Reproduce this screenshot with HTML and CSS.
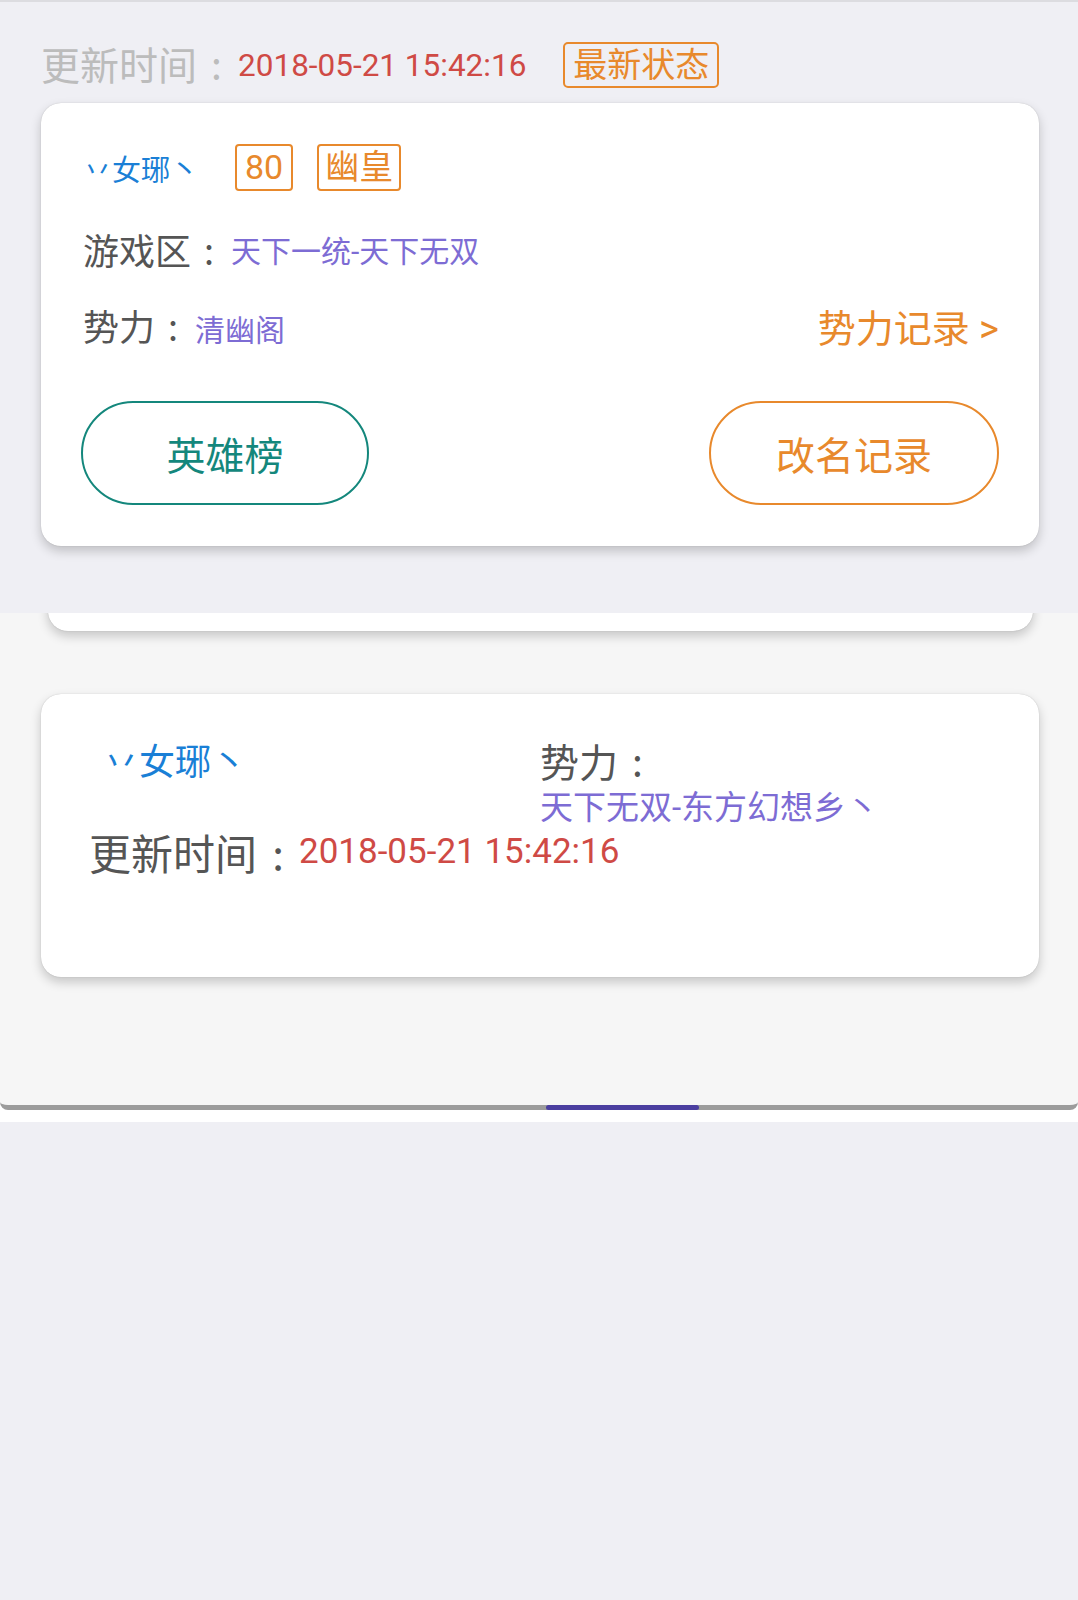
FILE: index.html
```html
<!DOCTYPE html>
<html lang="zh-CN">
<head>
    <meta charset="UTF-8">
    <meta name="viewport" content="width=device-width, initial-scale=1.0">
    <title>角色详情</title>
    <link rel="stylesheet" href="styles.css">
</head>
<body>
    <div class="top-line"></div>

    <!-- Latest status -->
    <div class="status-row">
        <span class="status-label">更新时间<span class="colon">:</span></span>
        <span class="status-time">2018-05-21 15:42:16</span>
        <span class="status-tag">最新状态</span>
    </div>

    <div class="card main-card">
        <div class="name-row">
            <span class="role-name">丷女琊丶</span>
            <span class="tag tag-level">80</span>
            <span class="tag">幽皇</span>
        </div>
        <div class="info-row">
            <span class="info-label">游戏区<span class="colon">:</span></span><span class="info-value">天下一统-天下无双</span>
        </div>
        <div class="info-row info-split">
            <span><span class="info-label">势力<span class="colon">:</span></span><span class="info-value">清幽阁</span></span>
            <a class="more-link" href="#">势力记录 &gt;</a>
        </div>
        <div class="btn-row">
            <a class="pill-btn pill-teal" href="#">英雄榜</a>
            <a class="pill-btn pill-orange" href="#">改名记录</a>
        </div>
    </div>

    <!-- History panel -->
    <div class="panel-wrap">
        <div class="panel">
            <div class="panel-list">
                <div class="card history-card history-prev"></div>
                <div class="card history-card">
                    <div class="history-top">
                        <div class="history-name">丷女琊丶</div>
                        <div class="history-guild">
                            <div class="history-guild-label">势力<span class="colon">:</span></div>
                            <div class="history-guild-value">天下无双-东方幻想乡丶</div>
                        </div>
                    </div>
                    <div class="history-time">
                        <span class="history-time-label">更新时间<span class="colon">:</span></span><span class="history-time-value">2018-05-21 15:42:16</span>
                    </div>
                </div>
            </div>
            <div class="panel-indicator"></div>
        </div>
    </div>
</body>
</html>
```

FILE: styles.css
```css
/* Page */
body {
    margin: 0;
    padding: 0;
    background-color: #efeff4;
    font-family: Roboto, "Noto Sans CJK SC", sans-serif;
    color: #555;
}

a {
    text-decoration: none;
}

/* Colon centered in a full-width cell */
.colon {
    display: inline-block;
    width: 1em;
    text-align: center;
    font-family: "Noto Sans CJK SC", sans-serif;
}

.top-line {
    height: 2px;
    background-color: #dcdce0;
}

/* Status header */
.status-row {
    display: flex;
    align-items: center;
    height: 46px;
    padding: 40px 0 0 41px;
}

.status-label {
    font-size: 39px;
    color: #bcbcbc;
    line-height: 46px;
}

.status-time {
    font-size: 31.5px;
    color: #cf4a45;
    margin-left: 2px;
}

.status-tag {
    margin-left: 37px;
    padding: 0 8px;
    font-size: 34px;
    line-height: 42px;
    color: #e8892c;
    border: 2px solid #e8892c;
    border-radius: 5px;
}

/* Cards */
.card {
    background-color: #fff;
    border-radius: 20px;
    box-shadow: 0 0 1px rgba(0, 0, 0, 0.25), 0 5px 11px rgba(0, 0, 0, 0.2);
}

.main-card {
    box-sizing: border-box;
    height: 443px;
    margin: 15px 39px 0 41px;
    padding: 41px 40px 0 42px;
}

.name-row {
    display: flex;
    align-items: center;
    height: 47px;
}

.role-name {
    font-size: 29px;
    color: #1a7fd6;
    margin-right: 36px;
}

.tag {
    font-size: 34px;
    line-height: 43px;
    padding: 0 6px;
    color: #e8892c;
    border: 2px solid #e8892c;
    border-radius: 4px;
    margin-right: 24px;
}

.tag-level {
    padding: 0 8px;
}

.info-row {
    display: flex;
    align-items: center;
    height: 50px;
    margin-top: 33px;
}

.info-split {
    justify-content: space-between;
    margin-top: 26px;
}

.info-label {
    font-size: 36px;
    color: #555;
}

.info-value {
    margin-left: 4px;
    font-size: 30px;
    color: #7d6cd4;
}

.more-link {
    font-size: 38px;
    color: #e8892c;
}

.btn-row {
    display: flex;
    justify-content: space-between;
    margin-top: 51px;
    margin-left: -2px;
}

.pill-btn {
    width: 284px;
    height: 100px;
    border: 2px solid;
    border-radius: 52px;
    display: flex;
    align-items: center;
    justify-content: center;
    font-size: 39px;
}

.pill-teal {
    color: #14877c;
    border-color: #14877c;
}

.pill-orange {
    width: 286px;
    color: #e8892c;
    border-color: #e8892c;
}

/* History panel */
.panel-wrap {
    margin-top: 67px;
    background-color: #fff;
    padding-bottom: 12px;
}

.panel {
    position: relative;
    background-color: #f6f6f6;
    border-bottom: 5px solid #9c9c9c;
    border-radius: 0 0 8px 8px;
}

.panel-list {
    height: 492px;
    overflow: hidden;
}

.history-card {
    margin: 0 39px 0 41px;
}

.history-prev {
    height: 300px;
    margin: -282px 45px 0 48px;
}

.history-card + .history-card {
    box-sizing: border-box;
    height: 283px;
    margin-top: 63px;
    padding-top: 43px;
}

.history-top {
    display: grid;
    grid-template-columns: 1fr 1fr;
}

.history-name {
    margin-top: 3px;
    padding-left: 62px;
    font-size: 36px;
    line-height: 46px;
    height: 46px;
    color: #1a7fd6;
}

.history-guild-label {
    font-size: 39px;
    line-height: 46px;
    height: 46px;
    color: #555;
}

.history-guild-value {
    margin-top: 2px;
    font-size: 33px;
    line-height: 46px;
    height: 46px;
    color: #7d6cd4;
}

.history-time {
    display: flex;
    align-items: center;
    height: 40px;
    padding-left: 48px;
}

.history-time-label {
    font-size: 42px;
    color: #555;
}

.history-time-value {
    font-size: 35px;
    color: #cf4a45;
}

/* Tab indicator sits over the panel edge */
.panel-indicator {
    position: absolute;
    left: 546px;
    bottom: -5px;
    width: 153px;
    height: 5px;
    border-radius: 3px;
    background-color: #4b3fa0;
}
```
